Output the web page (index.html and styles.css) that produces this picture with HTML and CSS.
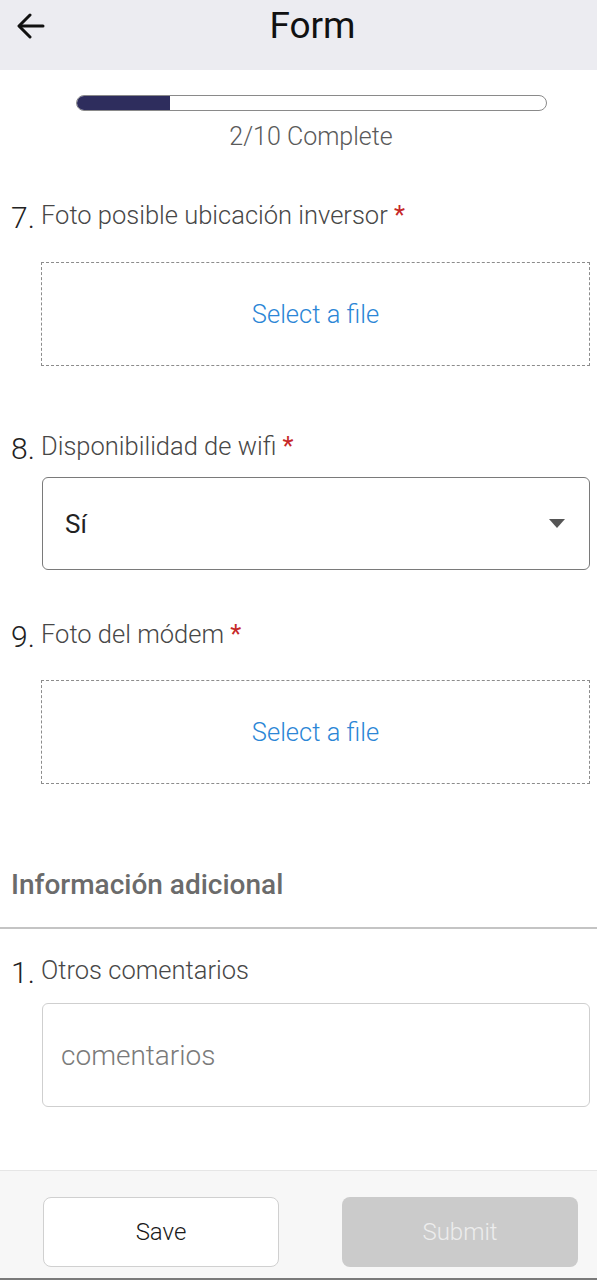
FILE: index.html
```html
<!DOCTYPE html>
<html lang="es">
<head>
  <meta charset="UTF-8" />
  <meta name="viewport" content="width=device-width, initial-scale=1.0"/>
  <title>Form</title>
  <link rel="stylesheet" href="styles.css">
</head>
<body>

  <header class="topbar">
    <button class="back" aria-label="Back">
      <svg width="28" height="26" viewBox="0 0 28 26" fill="none" stroke="#111" stroke-width="3" stroke-linecap="round" stroke-linejoin="round">
        <path d="M26 13H3"/>
        <path d="M13 2L2 13l11 11"/>
      </svg>
    </button>
    <h1>Form</h1>
  </header>

  <main class="form">
    <div class="progress">
      <div class="progress-track">
        <div class="progress-fill" style="width: 20%;"></div>
      </div>
      <p class="progress-label">2/10 Complete</p>
    </div>

    <div class="question q7">
      <div class="question-head">
        <span class="num">7.</span>
        <span class="label">Foto posible ubicación inversor <span class="req">*</span></span>
      </div>
      <div class="file-drop">Select a file</div>
    </div>

    <div class="question q8">
      <div class="question-head">
        <span class="num">8.</span>
        <span class="label">Disponibilidad de wifi <span class="req">*</span></span>
      </div>
      <div class="select">
        <span>Sí</span>
        <span class="caret"></span>
      </div>
    </div>

    <div class="question q9">
      <div class="question-head">
        <span class="num">9.</span>
        <span class="label">Foto del módem <span class="req">*</span></span>
      </div>
      <div class="file-drop">Select a file</div>
    </div>

    <section class="group">
      <h2>Información adicional</h2>
    </section>

    <div class="question q1">
      <div class="question-head">
        <span class="num">1.</span>
        <span class="label">Otros comentarios</span>
      </div>
      <div class="textarea">comentarios</div>
    </div>
  </main>

  <footer class="actions">
    <button class="btn save">Save</button>
    <button class="btn submit" disabled>Submit</button>
  </footer>

</body>
</html>
```

FILE: styles.css
```css
body {
  margin: 0;
  font-family: Roboto, "Liberation Sans", sans-serif;
  background-color: white;
  display: flex;
  flex-direction: column;
  height: 1280px;
  overflow: hidden;
}
.topbar {
  height: 70px;
  flex-shrink: 0;
  background-color: #ececf1;
  display: flex;
  justify-content: center;
  position: relative;
}
.topbar h1 {
  margin: 0;
  font-size: 37px;
  line-height: 52px;
  font-weight: 400;
  color: #111;
  transform: translateX(14px);
}
.back {
  position: absolute;
  left: 17px;
  top: 13px;
  padding: 0;
  border: none;
  background: none;
}
.back svg {
  display: block;
}

.form {
  flex: 1;
  display: flex;
  flex-direction: column;
  padding: 0 7px 0 11px;
}

/* progress */
.progress {
  display: flex;
  flex-direction: column;
  align-items: center;
  padding-top: 25px;
  padding-left: 21px;
}
.progress-track {
  width: 469px;
  height: 14px;
  border: 1.5px solid #8a8a8a;
  border-radius: 10px;
  overflow: hidden;
}
.progress-fill {
  height: 100%;
  background-color: #2e2d5d;
}
.progress-label {
  margin: 12px 0 0;
  font-size: 25px;
  line-height: 28px;
  font-weight: 300;
  color: #5a5a5a;
}

/* questions */
.question-head {
  display: flex;
  align-items: baseline;
  height: 32px;
}
.q7 { margin-top: 45px; }
.q8 { margin-top: 61px; }
.q9 { margin-top: 45px; }
.q1 { margin-top: 22px; }

.num {
  width: 30px;
  flex-shrink: 0;
  font-size: 30px;
  font-weight: 300;
  color: #222;
  position: relative;
  top: 4px;
}
.label {
  font-size: 25.5px;
  font-weight: 300;
  color: #474747;
}
.req {
  color: #c62828;
  font-weight: 400;
}

.file-drop {
  margin: 34px 0 0 30px;
  height: 102px;
  border: 1px dashed #8c8c8c;
  display: flex;
  align-items: center;
  justify-content: center;
  font-size: 25.5px;
  font-weight: 300;
  color: #2b86d6;
}
.q9 .file-drop {
  margin-top: 33px;
}

.select {
  margin: 18px 0 0 31px;
  height: 91px;
  border: 1.5px solid #7a7a7a;
  border-radius: 6px;
  display: flex;
  align-items: center;
  justify-content: space-between;
  padding: 0 24px 0 22px;
  font-size: 26px;
  color: #222;
}
.caret {
  width: 0;
  height: 0;
  border-left: 8.5px solid transparent;
  border-right: 8.5px solid transparent;
  border-top: 9px solid #555;
}

/* section */
.group {
  margin: 86px -7px 0 -11px;
  padding: 0 0 27px 11px;
  border-bottom: 2px solid #c4c4c4;
}
.group h2 {
  margin: 0;
  font-size: 28px;
  line-height: 30px;
  font-weight: 500;
  color: #6b6b6b;
}

.textarea {
  margin: 20px 0 0 31px;
  height: 102px;
  border: 1.5px solid #cfcfcf;
  border-radius: 6px;
  display: flex;
  align-items: center;
  padding-left: 18px;
  font-size: 28px;
  font-weight: 300;
  color: #7a7a7a;
}

/* footer */
.actions {
  flex-shrink: 0;
  height: 110px;
  box-sizing: border-box;
  background-color: #f7f7f7;
  border-top: 1px solid #e6e6e6;
  border-bottom: 2px solid #7a7a7a;
  display: flex;
  gap: 63px;
  padding: 26px 0 0 43px;
}
.btn {
  width: 236px;
  height: 70px;
  border-radius: 8px;
  font-family: Roboto, "Liberation Sans", sans-serif;
  font-size: 24px;
  font-weight: 300;
}
.save {
  background-color: white;
  border: 1.5px solid #d0d0d0;
  color: #1a1a1a;
}
.submit {
  background-color: #cbcbcb;
  border: none;
  color: #ededed;
}
```
